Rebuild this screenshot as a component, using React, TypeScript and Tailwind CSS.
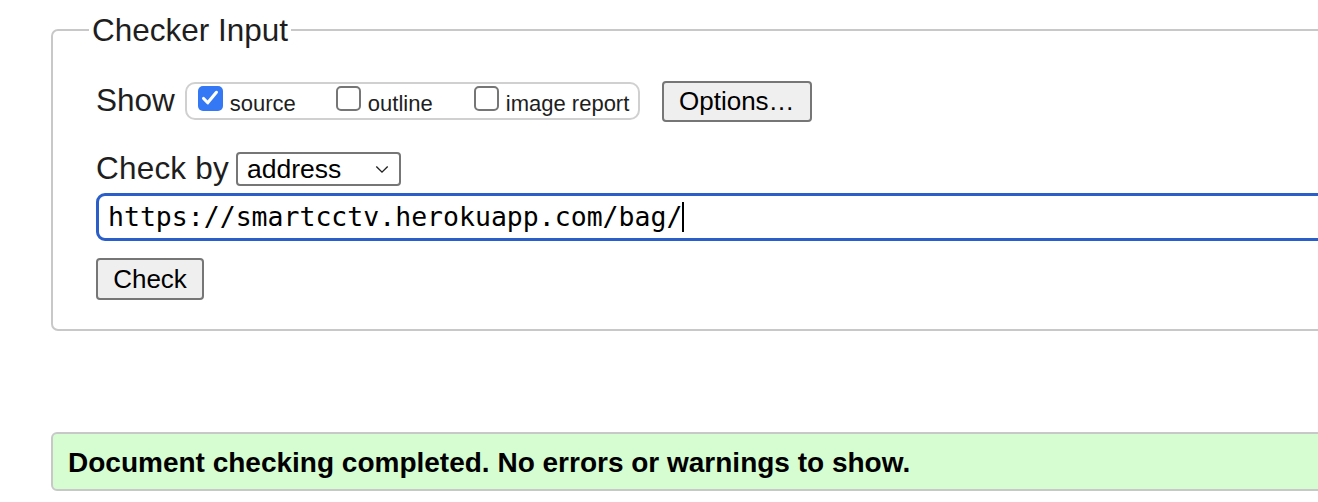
import React from "react";

const Check = () => (
  <svg viewBox="0 0 24 24" className="size-[22px]" fill="none">
    <path d="M5 12.5l4.5 4.7L19 5.8" stroke="white" strokeWidth="3.4" strokeLinecap="round" strokeLinejoin="round" />
  </svg>
);

const Box = ({ checked }: { checked?: boolean }) =>
  checked ? (
    <div className="size-[25px] rounded-[5px] bg-[#3478f6] flex items-center justify-center shrink-0 mb-[6px]">
      <Check />
    </div>
  ) : (
    <div className="size-[25px] rounded-[5px] border-2 border-[#767676] bg-white shrink-0 mb-[6px]" />
  );

const Item = ({ label, checked, wide }: { label: string; checked?: boolean; wide?: boolean }) => (
  <div className={`flex items-center gap-x-[7px] ${wide ? "" : "w-[138px]"}`}>
    <Box checked={checked} />
    <span className="text-[22px] leading-none mt-[6px]">{label}</span>
  </div>
);

export default function App() {
  return (
    <div className="w-[1318px] h-[502px] overflow-hidden bg-white text-[#1e1e1e] pt-[12px] font-['Liberation_Sans',Arial,sans-serif]">
      <fieldset className="ml-[51px] w-[1320px] border-2 border-[#c8c8c8] rounded-[7px] pl-[43px] pt-[32px] pb-[29px]">
        <legend className="-ml-[7px] px-[3px] text-[31.5px] leading-[36px]">Checker Input</legend>

        <div className="flex items-center h-[42px]">
          <span className="text-[31.5px] leading-none">Show</span>
          <div className="ml-[10px] h-[38px] w-[455px] rounded-[10px] border-2 border-[#d0d0d0] flex items-center pl-[11px]">
            <Item label="source" checked />
            <Item label="outline" />
            <Item label="image report" wide />
          </div>
          <button className="ml-[22px] h-[41px] w-[150px] bg-[#efefef] border-2 border-[#767676] rounded-[4px] text-[26px] leading-none text-black">
            Options…
          </button>
        </div>

        <div className="flex items-center h-[38px] mt-[28px]">
          <span className="text-[31.5px] leading-none tracking-[0.2px]">Check by</span>
          <div className="ml-[7px] h-[34px] w-[165px] border-2 border-[#767676] rounded-[4px] bg-white flex items-center justify-between pl-[9px] pr-[10px]">
            <span className="text-[26.5px] leading-none text-black">address</span>
            <svg viewBox="0 0 16 10" className="w-[14px] h-[9px]" fill="none">
              <path d="M1.5 1.5L8 8l6.5-6.5" stroke="#222" strokeWidth="1.6" />
            </svg>
          </div>
        </div>

        <div className="mt-[5px] h-[48px] w-[1240px] border-[3px] border-[#2a5fca] rounded-[9px] flex items-center pl-[9px]">
          <span className="font-['DejaVu_Sans_Mono',monospace] text-[26.5px] leading-none text-black">
            https://smartcctv.herokuapp.com/bag/
          </span>
          <span className="w-[2px] h-[30px] bg-black" />
        </div>

        <button className="mt-[17px] h-[42px] w-[108px] bg-[#efefef] border-2 border-[#767676] rounded-[4px] text-[26px] leading-none text-black">
          Check
        </button>
      </fieldset>

      <div className="mt-[101px] ml-[51px] w-[1320px] h-[59px] bg-[#d6fcd2] border-2 border-[#c8c8c8] rounded-[6px] flex items-center pl-[15px]">
        <p className="text-[28px] font-bold text-black leading-none mt-[2px]">
          Document checking completed. No errors or warnings to show.
        </p>
      </div>
    </div>
  );
}
